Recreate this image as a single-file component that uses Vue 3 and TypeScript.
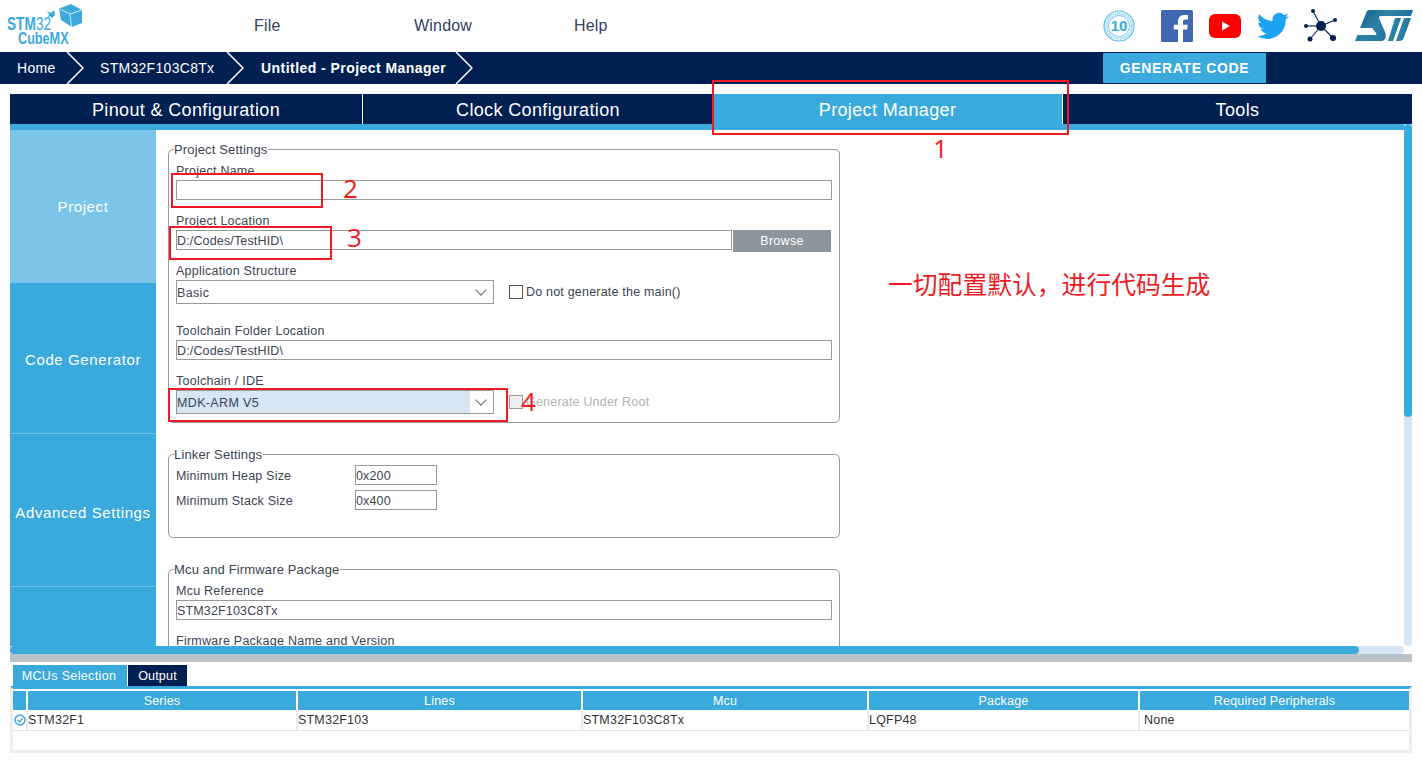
<script setup lang="ts">
// static data for the project manager screen
const menus = ['File', 'Window', 'Help'];
const crumbs = ['Home', 'STM32F103C8Tx', 'Untitled - Project Manager'];
const tabs = ['Pinout & Configuration', 'Clock Configuration', 'Project Manager', 'Tools'];
const sideItems = ['Project', 'Code Generator', 'Advanced Settings', ''];
const columns = ['Series', 'Lines', 'Mcu', 'Package', 'Required Peripherals'];
const row = ['STM32F1', 'STM32F103', 'STM32F103C8Tx', 'LQFP48', 'None'];
</script>

<template>
  <div class="app">
    <header class="top">
      <div class="logo">
        <span class="logo-stm">STM<i>32</i></span>
        <span class="logo-cube">CubeMX</span>
        <svg class="logo-art" width="50" height="32" viewBox="0 0 50 32">
          <path d="M4 8 L8 10 L11 7 L12 12 L9 15 L7 13 L5 15 L6 11 Z" fill="#3aa9dc" />
          <path d="M16 5.5 L28 1 L39 7 L39 20 L29 24 L18 17 Z" fill="#3aa9dc" />
          <path d="M16.5 6 L27 11 L39 7 M27 11 L28.5 24" fill="none" stroke="#cfeaf7" stroke-width="1" />
        </svg>
      </div>
      <nav class="menu">
        <span v-for="m in menus" :key="m" class="menu-item">{{ m }}</span>
      </nav>
      <div class="social">
        <svg class="badge" width="32" height="32" viewBox="0 0 32 32">
          <circle cx="16" cy="16" r="15" fill="none" stroke="#5dbbe8" stroke-width="1.2" />
          <circle cx="16" cy="16" r="12.6" fill="none" stroke="#8ccfee" stroke-width="2.6" stroke-dasharray="1.2 1" />
          <circle cx="16" cy="16" r="10.5" fill="#fff" stroke="#5dbbe8" stroke-width="0.8" />
          <text x="16" y="20.5" text-anchor="middle" class="badge-text">10</text>
        </svg>
        <svg class="fb" width="32" height="32" viewBox="0 0 32 32">
          <rect width="32" height="32" rx="1.5" fill="#4267b2" />
          <path d="M22 32 V19.6 H26.2 L26.8 14.8 H22 V11.7 C22 10.3 22.4 9.4 24.4 9.4 H27 V5.1 C26.5 5 25 4.9 23.3 4.9 C19.6 4.9 17 7.2 17 11.3 V14.8 H12.8 V19.6 H17 V32 Z" fill="#fff" />
        </svg>
        <svg class="yt" width="32" height="24" viewBox="0 0 32 24">
          <rect width="32" height="24" rx="6" fill="#fe0000" />
          <path d="M13 7.5 L21 12 L13 16.5 Z" fill="#fff" />
        </svg>
        <svg class="tw" width="32" height="32" viewBox="0 0 24 24">
          <path fill="#1da1f2" d="M23.953 4.57a10 10 0 01-2.825.775 4.958 4.958 0 002.163-2.723c-.951.555-2.005.959-3.127 1.184a4.92 4.92 0 00-8.384 4.482C7.69 8.095 4.067 6.13 1.64 3.162a4.822 4.822 0 00-.666 2.475c0 1.71.87 3.213 2.188 4.096a4.904 4.904 0 01-2.228-.616v.06a4.923 4.923 0 003.946 4.827 4.996 4.996 0 01-2.212.085 4.936 4.936 0 004.604 3.417 9.867 9.867 0 01-6.102 2.105c-.39 0-.779-.023-1.17-.067a13.995 13.995 0 007.557 2.209c9.053 0 13.998-7.496 13.998-13.985 0-.21 0-.42-.015-.63A9.935 9.935 0 0024 4.59z" />
        </svg>
        <svg class="net" width="34" height="34" viewBox="0 0 34 34">
          <g stroke="#002052" stroke-width="1.1">
            <line x1="17" y1="17" x2="9" y2="2" />
            <line x1="17" y1="17" x2="2" y2="17" />
            <line x1="17" y1="17" x2="31" y2="11" />
            <line x1="17" y1="17" x2="6" y2="30" />
            <line x1="17" y1="17" x2="29" y2="29" />
          </g>
          <g fill="#002052">
            <circle cx="17" cy="17" r="5" />
            <circle cx="9" cy="2" r="2" />
            <circle cx="2" cy="17" r="2" />
            <circle cx="31" cy="11" r="2" />
            <circle cx="6" cy="30" r="2.5" />
            <circle cx="29" cy="29" r="3" />
          </g>
        </svg>
        <svg class="st" width="60" height="32" viewBox="0 0 60 32">
          <defs>
            <linearGradient id="stg" x1="0" y1="0" x2="1" y2="0.5">
              <stop offset="0" stop-color="#0b5c85" />
              <stop offset="0.5" stop-color="#2f82a8" />
              <stop offset="1" stop-color="#0f6c96" />
            </linearGradient>
          </defs>
          <path fill="url(#stg)" d="M13 1 Q14 0 16 0 H59 L57 6 H27 Q24 6 25.5 9 L31 22 Q33 27 30 30 Q29 31 27 31 H1 L3.5 25 H22 Q23 25 22 23 L18 18 H6 Z" />
          <path fill="url(#stg)" d="M41 8 H47 L39 31 H34 Z" />
          <path fill="url(#stg)" d="M50 8 H57 L50 27 Q49 31 45 31 H42 Z" />
        </svg>
      </div>
    </header>

    <div class="crumbs">
      <div v-for="(c, i) in crumbs" :key="c" class="crumb" :class="'crumb-' + i">
        <span>{{ c }}</span>
        <svg class="chevron" width="18" height="32" viewBox="0 0 18 32">
          <path d="M1 0 L17 16 L1 32" fill="none" stroke="#fff" stroke-width="1.5" />
        </svg>
      </div>
      <button class="generate">GENERATE CODE</button>
    </div>

    <div class="tabs">
      <div v-for="(t, i) in tabs" :key="t" class="tab" :class="{ active: i === 2 }">{{ t }}</div>
    </div>
    <div class="strip"></div>

    <div class="work">
      <aside class="side">
        <div v-for="(s, i) in sideItems" :key="i" class="side-item" :class="{ sel: i === 0 }">{{ s }}</div>
      </aside>
      <main class="pane">
        <fieldset class="group">
          <legend>Project Settings</legend>
          <div class="field">
            <label>Project Name</label>
            <div class="input"></div>
          </div>
          <div class="field">
            <label>Project Location</label>
            <div class="browse-row">
              <div class="input grow">D:/Codes/TestHID\</div>
              <button class="browse">Browse</button>
            </div>
          </div>
          <div class="field tall">
            <label>Application Structure</label>
            <div class="select-row">
              <div class="select"><span class="sel-val">Basic</span><span class="chev"></span></div>
              <span class="check"></span>
              <span class="check-label">Do not generate the main()</span>
            </div>
          </div>
          <div class="field">
            <label>Toolchain Folder Location</label>
            <div class="input">D:/Codes/TestHID\</div>
          </div>
          <div class="field last">
            <label>Toolchain / IDE</label>
            <div class="select-row">
              <div class="select"><span class="sel-val hi">MDK-ARM V5</span><span class="chev"></span></div>
              <span class="check off"></span>
              <span class="check-label off">Generate Under Root</span>
            </div>
          </div>
        </fieldset>

        <fieldset class="group linker">
          <legend>Linker Settings</legend>
          <div class="pair"><label>Minimum Heap Size</label><div class="input small">0x200</div></div>
          <div class="pair"><label>Minimum Stack Size</label><div class="input small">0x400</div></div>
        </fieldset>

        <fieldset class="group">
          <legend>Mcu and Firmware Package</legend>
          <div class="field">
            <label>Mcu Reference</label>
            <div class="input">STM32F103C8Tx</div>
          </div>
          <div class="field">
            <label>Firmware Package Name and Version</label>
          </div>
        </fieldset>
      </main>
      <div class="vbar"><div class="vthumb"></div></div>
    </div>

    <div class="hbar"><div class="hthumb"></div></div>
    <div class="divider"></div>

    <div class="bottom-tabs">
      <span class="btab on">MCUs Selection</span>
      <span class="btab">Output</span>
    </div>
    <section class="table-wrap">
      <div class="grid head">
        <div class="cell"></div>
        <div v-for="c in columns" :key="c" class="cell">{{ c }}</div>
      </div>
      <div class="grid body">
        <div class="cell ok">
          <svg width="12" height="12" viewBox="0 0 12 12">
            <circle cx="6" cy="6" r="5" fill="none" stroke="#3aa9dc" stroke-width="1.5" />
            <path d="M3.4 6 L5.4 8 L8.6 4.4" fill="none" stroke="#3aa9dc" stroke-width="1.4" />
          </svg>
        </div>
        <div v-for="c in row" :key="c" class="cell">{{ c }}</div>
      </div>
    </section>

    <!-- red annotations drawn on top of the screenshot -->
    <div class="mark m1"></div>
    <div class="mark m2"></div>
    <div class="mark m3"></div>
    <div class="mark m4"></div>
    <span class="num n1">1</span>
    <span class="num n2">2</span>
    <span class="num n3">3</span>
    <span class="num n4">4</span>
    <span class="note">一切配置默认，进行代码生成</span>
  </div>
</template>

<style scoped>
.app {
  position: relative;
  width: 1422px;
  height: 763px;
  overflow: hidden;
  display: flex;
  flex-direction: column;
  background: #fff;
  color: #3c4452;
  font-family: "Liberation Sans", Arial, sans-serif;
  font-size: 12.5px;
}

/* header */
.top { height: 52px; display: flex; align-items: center; flex: none; }
.logo { position: relative; width: 254px; height: 52px; flex: none; font-weight: 700; color: #3aa9dc; }
.logo i { font-style: normal; font-weight: 400; }
.logo-stm { position: absolute; left: 7px; top: 16px; font-size: 18px; line-height: 16px; transform: scaleX(0.76); transform-origin: left; }
.logo-cube { position: absolute; left: 18px; top: 32px; font-size: 16px; line-height: 14px; transform: scaleX(0.79); transform-origin: left; }
.logo-art { position: absolute; left: 43px; top: 3px; }
.menu { display: flex; }
.menu-item { width: 160px; font-size: 16px; letter-spacing: 0.2px; color: #34405e; }
.social { margin-left: auto; display: flex; align-items: center; padding-right: 8px; }
.badge { margin-right: 26px; }
.fb { margin-right: 16px; }
.yt { margin-right: 16px; }
.tw { margin-right: 15px; }
.net { margin-right: 16px; }
.badge-text { font-size: 15px; font-weight: 700; fill: #3aa9dc; }

/* breadcrumb */
.crumbs { height: 32px; flex: none; background: #002052; display: flex; color: #fff; font-size: 14px; position: relative; letter-spacing: 0.3px; }
.crumb { position: relative; height: 32px; line-height: 32px; box-sizing: border-box; flex: none; }
.crumb-0 { width: 84px; padding-left: 17px; }
.crumb-1 { width: 160px; padding-left: 16px; }
.crumb-2 { width: 229px; padding-left: 17px; font-weight: 700; letter-spacing: 0.45px; }
.chevron { position: absolute; right: 0; top: 0; }
.generate {
  position: absolute;
  left: 1103px;
  top: 1px;
  width: 163px;
  height: 30px;
  border: 0;
  background: #3aa9dc;
  color: #fff;
  font: 700 14px "Liberation Sans", Arial, sans-serif;
  letter-spacing: 0.65px;
}

/* main tabs */
.tabs { margin: 10px 10px 0; height: 30px; flex: none; display: grid; grid-template-columns: 353px 350px 350px 349px; background: #002052; }
.tab { color: #fff; font-size: 18px; line-height: 32px; letter-spacing: 0.36px; text-align: center; box-sizing: border-box; }
.tab:nth-child(1), .tab:nth-child(3) { border-right: 1px solid #fff; }
.tab.active { background: #3aa9dc; }
.strip { margin: 0 10px; height: 6px; background: #3aa9dc; flex: none; }

/* work area */
.work { margin: 0 10px; height: 516px; flex: none; display: flex; }
.side { width: 146px; flex: none; display: flex; flex-direction: column; background: #3aa9dc; }
.side-item { height: 153px; line-height: 153px; text-align: center; color: #fff; font-size: 15px; letter-spacing: 0.6px; border-bottom: 1px solid #74c1e6; box-sizing: border-box; flex: none; }
.side-item.sel { background: #7bc5e8; border-bottom: 0; }
.side-item:nth-child(2) { height: 151px; line-height: 154px; }
.side-item:nth-child(3) { line-height: 158px; }
.side-item:last-child { border-bottom: 0; }
.pane { flex: 1; overflow: hidden; padding: 12px 0 0 12px; box-sizing: border-box; min-width: 0; }
.vbar { position: absolute; left: 1404px; top: 124px; width: 8px; height: 522px; background: #d6e6f4; border-radius: 0 0 4px 4px; }
.vthumb { height: 293px; background: #3aa9dc; border-radius: 4px; }

.group { width: 672px; box-sizing: border-box; margin: 0 0 24px; padding: 4px 7px 8px; border: 1px solid #999; border-radius: 5px; min-inline-size: 0; }
.group legend { padding: 1px 1px 0 0; margin-left: -2px; font-size: 13px; line-height: 13px; letter-spacing: 0.15px; }
.field { height: 50px; }
.field.tall { height: 60px; }
.field.last { height: 44px; }
.field label { display: block; padding-top: 1px; line-height: 20px; height: 20px; box-sizing: border-box; white-space: nowrap; letter-spacing: 0.25px; }
.input { width: 656px; height: 20px; line-height: 20px; border: 1px solid #999; box-sizing: border-box; background: #fff; letter-spacing: 0.15px; }
.browse-row { display: flex; }
.input.grow { width: 556px; height: 20px; }
.browse { margin-left: 1px; width: 98px; height: 22px; border: 0; background: #8c969c; color: #fff; font: 12.5px "Liberation Sans", Arial, sans-serif; letter-spacing: 0.3px; }
.select-row { display: flex; align-items: center; }
.select { width: 318px; height: 24px; border: 1px solid #999; box-sizing: border-box; display: flex; align-items: stretch; }
.sel-val { flex: 1; line-height: 24px; letter-spacing: 0.35px; }
.sel-val.hi { background: #d6e6f4; }
.chev { width: 23px; flex: none; position: relative; }
.chev::after {
  content: "";
  position: absolute;
  left: 7px;
  top: 5px;
  width: 7px;
  height: 7px;
  border-right: 1px solid #666;
  border-bottom: 1px solid #666;
  transform: rotate(45deg);
}
.check { width: 12px; height: 12px; border: 1px solid #555; margin-left: 15px; flex: none; }
.check.off { border-color: #999; background: #eee; }
.check-label { margin-left: 3px; letter-spacing: 0.2px; }
.check-label.off { color: #b2b2b2; }

.linker { padding-bottom: 22px; }
.pair { height: 25px; display: flex; }
.pair label { width: 179px; padding-top: 1px; line-height: 20px; box-sizing: border-box; flex: none; letter-spacing: 0.2px; }
.input.small { width: 82px; }

/* scrollbars and divider */
.hbar { margin: 0 18px 0 10px; height: 8px; background: #d6e6f4; border-radius: 0 4px 4px 0; flex: none; }
.hthumb { width: 1349px; height: 8px; background: #3aa9dc; border-radius: 4px; }
.divider { margin: 0 10px; height: 8px; background: #b8c2c8; flex: none; }

/* bottom table */
.bottom-tabs { display: flex; gap: 1px; margin: 3px 0 0 13px; height: 21px; flex: none; }
.btab { width: 59px; background: #002052; color: #fff; line-height: 22px; text-align: center; font-size: 12.5px; letter-spacing: 0.2px; box-sizing: border-box; }
.btab.on { width: 114px; background: #3aa9dc; letter-spacing: 0.35px; padding-right: 2px; }
.table-wrap { margin: 0 10px; border-top: 3px solid #3aa9dc; border-right: 3px solid #eee; border-bottom: 3px solid #eee; border-left: 3px solid #eee; height: 61px; flex: none; width: 1396px; }
.grid { display: grid; grid-template-columns: 13px 268px 283px 284px 269px 269px; column-gap: 2px; }
.grid.head { padding-top: 2px; }
.head .cell { background: #3aa9dc; color: #fff; text-align: center; line-height: 20px; height: 19px; letter-spacing: 0.2px; }
.grid.body { height: 21px; box-sizing: border-box; background: #e9ebee; border-bottom: 1px solid #e0e3e6; }
.body .cell { line-height: 21px; height: 20px; background: #fff; color: #333; letter-spacing: 0.2px; }
.body .cell:last-child { padding-left: 4px; }
.body .ok { padding: 4px 0 0 1px; line-height: 0; box-sizing: border-box; }

/* annotations */
.mark { position: absolute; border: 2px solid #ed1c24; box-sizing: border-box; }
.m1 { left: 712px; top: 80px; width: 357px; height: 55px; }
.m2 { left: 171px; top: 173px; width: 152px; height: 35px; }
.m3 { left: 169px; top: 226px; width: 163px; height: 34px; }
.m4 { left: 168px; top: 388px; width: 340px; height: 34px; }
.num { position: absolute; color: #ed1c24; font: 26px/30px "Open Sans", sans-serif; }
.n1 { left: 933px; top: 133px; }
.n2 { left: 343px; top: 173px; }
.n3 { left: 347px; top: 222px; }
.n4 { left: 521px; top: 386px; }
.note { position: absolute; left: 888px; top: 266px; color: #ed1c24; font: 24.8px/34px "Noto Sans CJK SC", sans-serif; white-space: nowrap; }
</style>

<style>
html, body { margin: 0; padding: 0; background: #fff; overflow: hidden; }
</style>
